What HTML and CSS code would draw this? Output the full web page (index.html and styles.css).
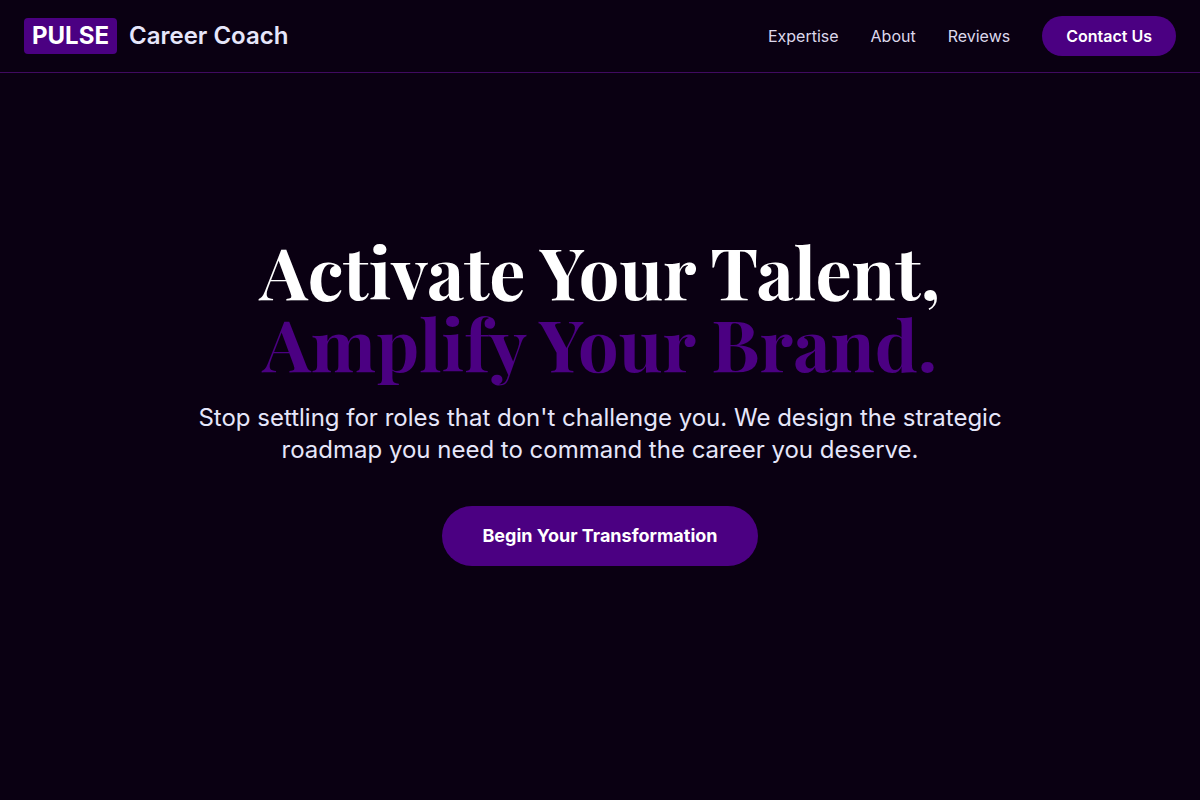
FILE: index.html
```html
<!DOCTYPE html>
<html lang="en">
<head>
    <meta charset="UTF-8">
    <meta name="viewport" content="width=device-width, initial-scale=1.0">
    <title>PULSE Career Coach</title>
    <link rel="stylesheet" href="styles.css">
</head>
<body>
    <!-- Header -->
    <header class="header">
        <a href="#" class="logo">
            <span class="logo-badge">PULSE</span>
            <span class="logo-text">Career Coach</span>
        </a>
        <nav class="nav">
            <a href="#expertise" class="nav-link">Expertise</a>
            <a href="#about" class="nav-link">About</a>
            <a href="#reviews" class="nav-link">Reviews</a>
            <a href="#contact" class="nav-button">Contact Us</a>
        </nav>
    </header>

    <!-- Hero -->
    <main class="hero">
        <h1 class="hero-title">
            Activate Your Talent,
            <span class="hero-accent">Amplify Your Brand.</span>
        </h1>
        <p class="hero-text">Stop settling for roles that don't challenge you. We design the strategic roadmap you need to command the career you deserve.</p>
        <a href="#contact" class="hero-button">Begin Your Transformation</a>
    </main>
</body>
</html>
```
FILE: styles.css
```css
:root {
    --bg-color: #0a0012;
    --accent-color: #4b0082;
    --text-color: #e6e6fa;
    --link-color: #dcd8ec;
    --line-color: #400a60;
}

* {
    margin: 0;
    padding: 0;
    box-sizing: border-box;
}

body {
    background: var(--bg-color);
    color: var(--text-color);
    font-family: 'Inter', sans-serif;
    font-size: 16px;
    line-height: 24px;
}

a {
    color: inherit;
    text-decoration: none;
}

/* Header */
.header {
    position: fixed;
    top: 0;
    left: 0;
    right: 0;
    display: flex;
    justify-content: space-between;
    align-items: center;
    padding: 16px 24px;
    background: var(--bg-color);
    border-bottom: 1px solid var(--line-color);
}

.logo {
    display: flex;
    align-items: center;
    gap: 12px;
    font-size: 24px;
    font-weight: 700;
    line-height: 28px;
}

.logo-badge {
    padding: 4px 8px;
    background: var(--accent-color);
    color: #ffffff;
    border-radius: 4px;
}

.logo-text {
    font-weight: 600;
}

.nav {
    display: flex;
    align-items: center;
    gap: 32px;
}

.nav-link {
    color: var(--link-color);
}

.nav-button {
    padding: 8px 24px;
    background: var(--accent-color);
    color: #ffffff;
    font-weight: 600;
    border-radius: 999px;
}

/* Hero */
.hero {
    min-height: 100vh;
    display: flex;
    flex-direction: column;
    justify-content: center;
    align-items: center;
    padding: 80px 24px;
    text-align: center;
}

.hero-title {
    margin-bottom: 24px;
    color: #ffffff;
    font-family: 'Playfair Display', 'Liberation Serif', serif;
    font-size: 72px;
    font-weight: 700;
    line-height: 72px;
}

.hero-accent {
    display: block;
    color: var(--accent-color);
}

.hero-text {
    max-width: 832px;
    margin-bottom: 40px;
    font-size: 24px;
    line-height: 32px;
}

.hero-button {
    padding: 16px 40px;
    background: var(--accent-color);
    color: #ffffff;
    font-size: 18px;
    font-weight: 700;
    line-height: 28px;
    border-radius: 999px;
}
```
